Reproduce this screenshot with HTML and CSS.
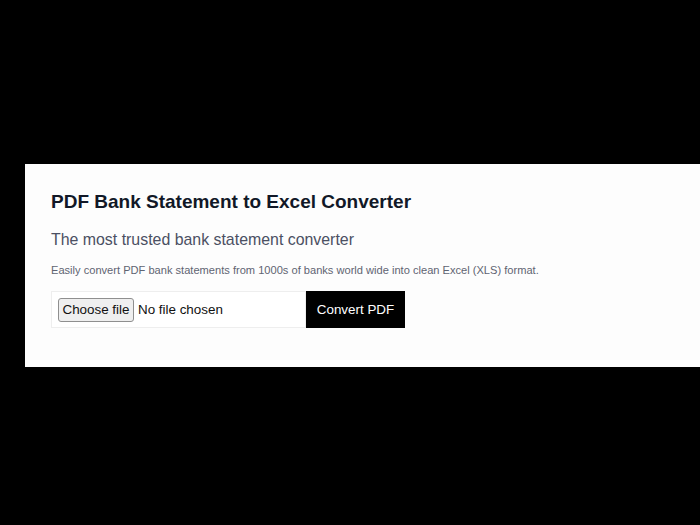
FILE: index.html
```html
<!DOCTYPE html>
<html lang="en">
<head>
    <meta charset="UTF-8">
    <meta name="viewport" content="width=device-width, initial-scale=1.0">
    <title>PDF Bank Statement to Excel Converter</title>
    <link rel="stylesheet" href="styles.css">
</head>
<body>
    <div class="panel">
        <h1>PDF Bank Statement to Excel Converter</h1>
        <h2>The most trusted bank statement converter</h2>
        <p class="description">Easily convert PDF bank statements from 1000s of banks world wide into clean Excel (XLS) format.</p>
        <form class="upload-form" onsubmit="return false">
            <label class="file-box">
                <input type="file" id="statementFile" accept=".pdf">
                <span class="choose-button">Choose file</span>
                <span class="file-name" id="fileName">No file chosen</span>
            </label>
            <button type="submit" class="convert-button">Convert PDF</button>
        </form>
    </div>

    <script>
        const statementFile = document.getElementById('statementFile');
        const fileName = document.getElementById('fileName');

        statementFile.addEventListener('change', () => {
            if (statementFile.files.length > 0) {
                fileName.textContent = statementFile.files[0].name;
            } else {
                fileName.textContent = 'No file chosen';
            }
        });
    </script>
</body>
</html>
```

FILE: styles.css
```css
body {
    margin: 0;
    background-color: #000;
    font-family: "Liberation Sans", Arial, sans-serif;
}
.panel {
    margin: 164px 0 0 25px;
    background-color: #fdfdfd;
    padding: 27px 26px 39px 26px;
}
h1 {
    margin: 0;
    font-size: 19px;
    font-weight: bold;
    color: #111827;
}
h2 {
    margin: 18px 0 0 0;
    font-size: 15.9px;
    font-weight: normal;
    color: #4b5063;
}
.description {
    margin: 15px 0 0 0;
    font-size: 11.1px;
    color: #5f6472;
}
.upload-form {
    display: flex;
    margin-top: 15px;
}
.file-box {
    width: 247px;
    height: 35px;
    padding: 0 0 0 6px;
    border: 1px solid #eee;
    background-color: #fff;
    display: flex;
    align-items: center;
    cursor: pointer;
}
.file-box input {
    display: none;
}
.choose-button {
    box-sizing: border-box;
    width: 76px;
    height: 24px;
    line-height: 22px;
    text-align: center;
    font-size: 13.4px;
    color: #111;
    background-color: #efefef;
    border: 1px solid #8f8f8f;
    border-radius: 3px;
}
.file-name {
    margin-left: 4px;
    font-size: 13.4px;
    color: #111;
}
.convert-button {
    width: 99px;
    height: 37px;
    border: none;
    background-color: #000;
    color: #fff;
    font-family: "Liberation Sans", Arial, sans-serif;
    font-size: 13.4px;
    cursor: pointer;
}
```
